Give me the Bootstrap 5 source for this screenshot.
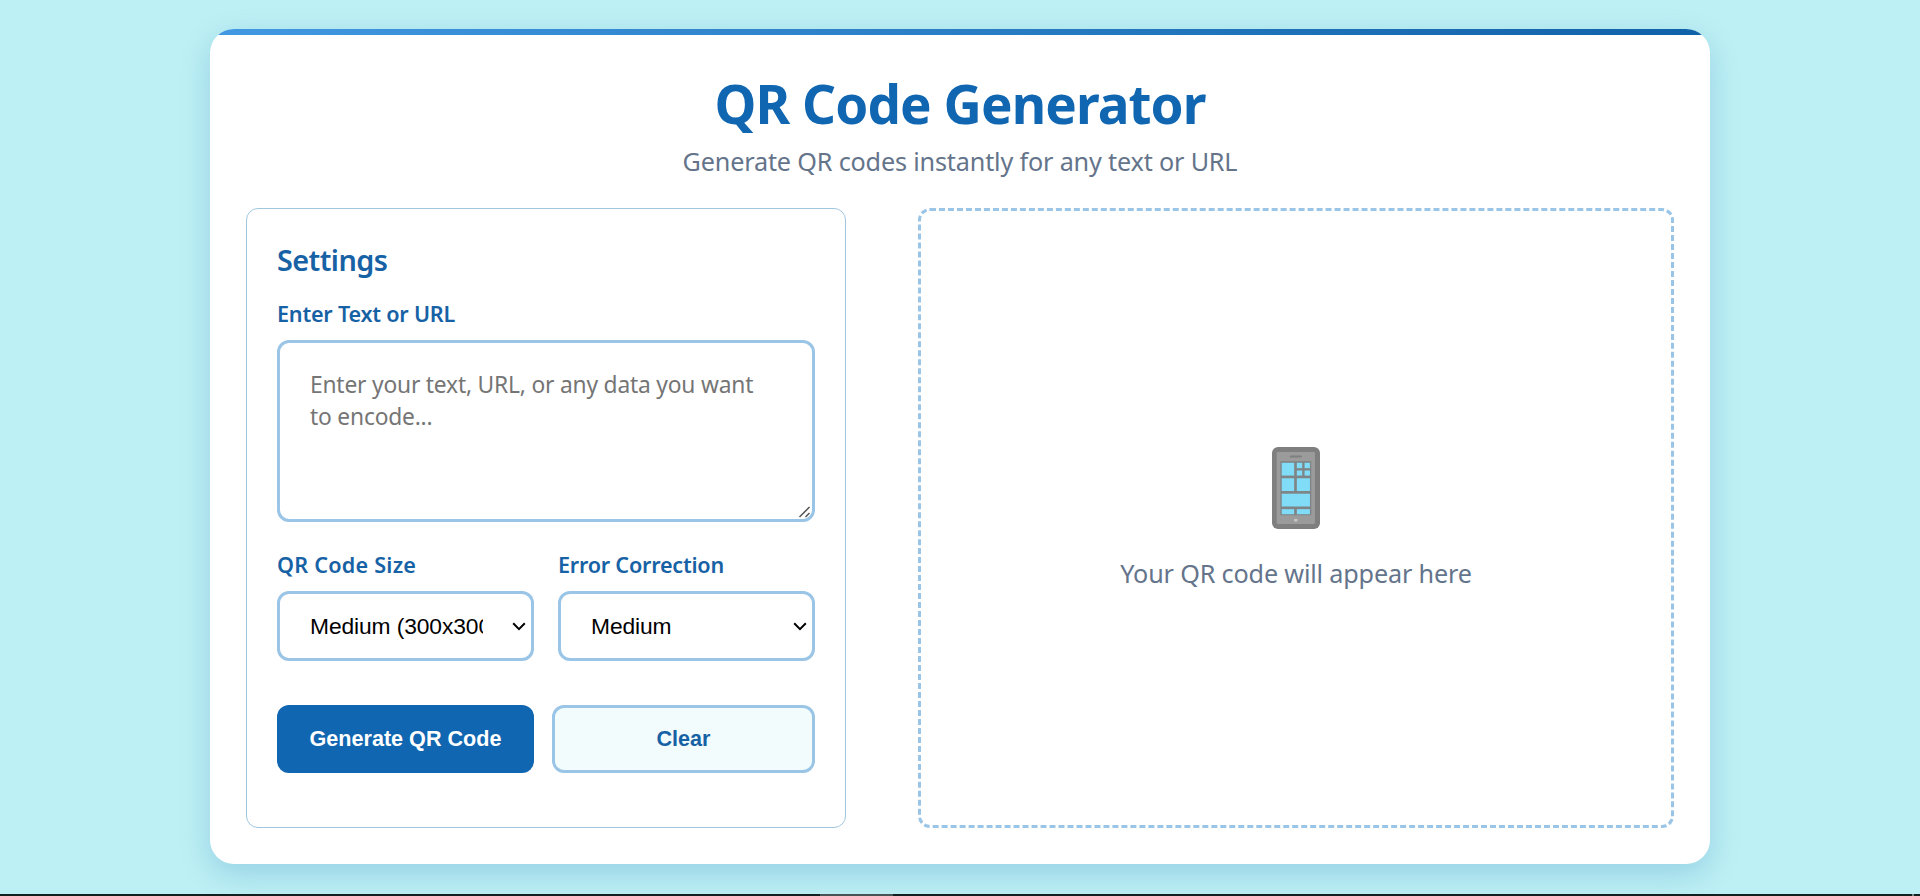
<!DOCTYPE html>
<html lang="en">
<head>
<meta charset="utf-8">
<title>QR Code Generator</title>
<link href="https://cdn.jsdelivr.net/npm/bootstrap@5.3.0/dist/css/bootstrap.min.css" rel="stylesheet">
<style>
body{background:#bdf0f4;font-family:"Noto Sans","Open Sans",sans-serif;height:896px;overflow:hidden}
.shell{width:1500px;height:835px;margin-top:29px;padding:36px;border-radius:24px;background:#fff;box-shadow:0 10px 30px rgba(14,101,176,.22);overflow:hidden}
.wrap{height:894px}
.accent{height:6px;margin:-36px -36px 30px;background:linear-gradient(90deg,#4299e1,#1062a8)}
h1{font-size:53px;line-height:77px;font-weight:700;letter-spacing:-.92px;color:#1066b1;margin:0 0 3px}
.tagline,.hint{font-size:25.2px;line-height:33px;letter-spacing:-.17px;color:#64748b;margin:0}
.tagline{margin-bottom:30px}
.panels{gap:72px;height:620px}
.settings{width:600px;border:1px solid #a0c6de;border-radius:12px;padding:30px}
.preview{border:3px dashed #9ac5e6;border-radius:12px}
h2{font-size:28.8px;line-height:42px;font-weight:600;letter-spacing:-.55px;color:#1762a5;margin:0 0 18px}
.lbl{display:block;font-size:21.6px;line-height:29px;font-weight:600;letter-spacing:-.22px;color:#1762a5;margin-bottom:12px;white-space:nowrap}
.lbl.loose{letter-spacing:.23px}
.field{display:block;width:100%;border:3px solid #9ac5e6;border-radius:12px;background:#fff;color:#000}
textarea.field{height:182px;padding:26px 50px 22px 30px;font-size:22.8px;line-height:32px;letter-spacing:-.2px;margin-bottom:28px;resize:vertical}
textarea::placeholder{color:#757575}
textarea::-webkit-resizer{background:url("data:image/svg+xml,%3Csvg xmlns='http://www.w3.org/2000/svg' width='15' height='15'%3E%3Cpath d='M2.5 13 12.5 3M8.5 13 12.5 9' stroke='%23555' stroke-width='1.5'/%3E%3C/svg%3E") no-repeat}
select.field{height:70px;padding:0 48px 0 30px;font:22.8px "Liberation Sans",sans-serif;letter-spacing:-.1px;appearance:none;background:#fff url("data:image/svg+xml,%3Csvg xmlns='http://www.w3.org/2000/svg' width='14' height='9'%3E%3Cpath d='M1.2 1.3 7 7.1 12.8 1.3' fill='none' stroke='%23000' stroke-width='2'/%3E%3C/svg%3E") no-repeat right 5px top 28px}
.pair{gap:24px;margin-bottom:44px}
.actions{gap:18px}
.act{flex:1 1 0;height:68px;padding:0 30px;border:0;border-radius:12px;background:#1066b1;color:#fff;font:bold 21.6px "Liberation Sans",sans-serif;white-space:nowrap}
.act.alt{background:#f2fcfd;border:3px solid #9ac5e6;color:#1762a5}
.phone{width:48px;height:82px;margin-bottom:28px}
.strip{height:2px;background:linear-gradient(90deg,#12201f 820px,#4a5454 820px 893px,#12201f 893px 1912px,#7d8787 1912px 1914px,#12201f 1914px)}
</style>
</head>
<body>
<div class="wrap d-flex justify-content-center align-items-start">
<main class="shell">
  <div class="accent"></div>
  <header class="text-center">
    <h1>QR Code Generator</h1>
    <p class="tagline">Generate QR codes instantly for any text or URL</p>
  </header>
  <div class="panels d-flex">
    <section class="settings flex-shrink-0">
      <h2>Settings</h2>
      <label class="lbl" for="data">Enter Text or URL</label>
      <textarea class="field" id="data" placeholder="Enter your text, URL, or any data you want to encode..."></textarea>
      <div class="pair d-flex">
        <div class="w-50"><label class="lbl loose" for="size">QR Code Size</label>
          <select class="field" id="size"><option>Medium (300x300)</option></select></div>
        <div class="w-50"><label class="lbl" for="level">Error Correction</label>
          <select class="field" id="level"><option>Medium</option></select></div>
      </div>
      <div class="actions d-flex">
        <button class="act" type="button">Generate QR Code</button>
        <button class="act alt" type="button">Clear</button>
      </div>
    </section>
    <section class="preview flex-grow-1 d-flex flex-column align-items-center justify-content-center">
      <svg class="phone" viewBox="0 0 143 244" preserveAspectRatio="none">
        <rect width="143" height="244" rx="18" fill="#7f7f7f"/>
        <rect x="14" y="15" width="114" height="214" rx="4" fill="#9b9b9b"/>
        <rect x="53" y="25" width="36" height="6" rx="2" fill="#7f7f7f"/>
        <rect x="25" y="42" width="92" height="161" fill="#7f8586"/>
        <g fill="#81dcf8"><rect x="29" y="47" width="37" height="38"/><rect x="74" y="47" width="16" height="16"/><rect x="97" y="47" width="16" height="16"/><rect x="74" y="70" width="16" height="15"/><rect x="97" y="70" width="16" height="15"/><rect x="29" y="93" width="37" height="38"/><rect x="74" y="93" width="39" height="38"/><rect x="29" y="139" width="84" height="38"/><rect x="29" y="185" width="37" height="15"/><rect x="74" y="185" width="39" height="15"/></g>
        <rect x="66" y="214" width="10" height="8" rx="2" fill="#c8c8c8"/>
      </svg>
      <p class="hint">Your QR code will appear here</p>
    </section>
  </div>
</main>
</div>
<div class="strip"></div>
<script src="https://cdn.jsdelivr.net/npm/bootstrap@5.3.0/dist/js/bootstrap.bundle.min.js"></script>
</body>
</html>
